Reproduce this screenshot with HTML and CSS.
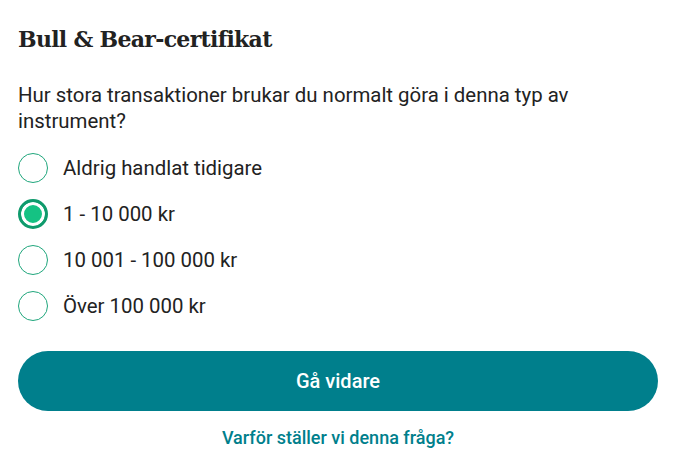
FILE: index.html
```html
<!DOCTYPE html>
<html lang="sv">
<head>
<meta charset="utf-8">
<link rel="stylesheet" href="styles.css">
</head>
<body>
<main class="page">
  <h1 class="title">Bull &amp; Bear-certifikat</h1>
  <p class="question">Hur stora transaktioner brukar du normalt göra i denna typ av instrument?</p>
  <div class="options">
    <label class="option"><span class="radio"></span><span class="label">Aldrig handlat tidigare</span></label>
    <label class="option"><span class="radio checked"></span><span class="label">1 - 10 000 kr</span></label>
    <label class="option"><span class="radio"></span><span class="label">10 001 - 100 000 kr</span></label>
    <label class="option"><span class="radio"></span><span class="label">Över 100 000 kr</span></label>
  </div>
  <button class="btn">Gå vidare</button>
  <a class="why" href="#">Varför ställer vi denna fråga?</a>
</main>
</body>
</html>
```
FILE: styles.css
```css
html, body { margin: 0; padding: 0; background: #fff; }
.page {
  padding: 22px 24px 0 18px;
  font-family: Roboto, "Liberation Sans", sans-serif;
  color: #222;
  display: flex;
  flex-direction: column;
}
.title {
  font-family: "DejaVu Serif", serif;
  font-weight: bold;
  font-size: 22px;
  line-height: 34px;
  margin: 0;
  color: #222;
  letter-spacing: -0.7px;
}
.question {
  margin: 26px 0 0 0;
  font-size: 20.4px;
  line-height: 26px;
  color: #222;
}
.options {
  margin-top: 19px;
  display: flex;
  flex-direction: column;
  gap: 16px;
}
.option {
  display: flex;
  align-items: center;
  gap: 15px;
  height: 30px;
  font-size: 20.4px;
}
.radio {
  width: 30px;
  height: 30px;
  box-sizing: border-box;
  border: 1.5px solid #1fa67c;
  border-radius: 50%;
  flex: none;
}
.radio.checked {
  border: 3px solid #0f9a6c;
  background: #15c283;
  box-shadow: inset 0 0 0 3px #fff;
}
.btn {
  margin-top: 30px;
  height: 60px;
  border: none;
  border-radius: 30px;
  background: #007f8c;
  color: #fff;
  font-family: Roboto, "Liberation Sans", sans-serif;
  font-weight: 500;
  font-size: 20px;
}
.why {
  align-self: center;
  margin-top: 16px;
  color: #007f8c;
  font-weight: 500;
  font-size: 18px;
  line-height: 22px;
  text-decoration: none;
}
```
